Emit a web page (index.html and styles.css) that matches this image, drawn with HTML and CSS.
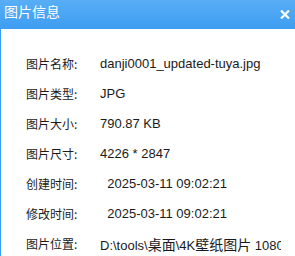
FILE: index.html
```html
<!DOCTYPE html>
<html lang="zh-CN">
<head>
  <meta charset="UTF-8">
  <meta name="viewport" content="width=device-width, initial-scale=1.0">
  <title>图片信息</title>
  <link rel="stylesheet" href="styles.css">
</head>
<body>
  <div class="dialog">
    <div class="title-bar">
      <span class="title">图片信息</span>
      <svg class="close" width="10" height="9" viewBox="0 0 10 9">
        <path d="M1 0.5 L9 8.5 M9 0.5 L1 8.5" stroke="#fff" stroke-width="2.2" fill="none"/>
      </svg>
    </div>
    <div class="content">
      <div class="row"><span class="label">图片名称:</span><span class="value">danji0001_updated-tuya.jpg</span></div>
      <div class="row"><span class="label">图片类型:</span><span class="value">JPG</span></div>
      <div class="row"><span class="label">图片大小:</span><span class="value">790.87 KB</span></div>
      <div class="row"><span class="label">图片尺寸:</span><span class="value">4226 * 2847</span></div>
      <div class="row"><span class="label">创建时间:</span><span class="value">&nbsp;&nbsp;2025-03-11 09:02:21</span></div>
      <div class="row"><span class="label">修改时间:</span><span class="value">&nbsp;&nbsp;2025-03-11 09:02:21</span></div>
      <div class="row"><span class="label">图片位置:</span><span class="value">D:\tools\<span class="cjk">桌面</span>\4K<span class="cjk">壁纸图片</span> 1080P\danji0001_updated-tuya.jpg</span></div>
    </div>
  </div>
</body>
</html>
```

FILE: styles.css
```css
body {
  margin: 0;
  font-family: "Liberation Sans", "Noto Sans CJK SC", sans-serif;
  font-size: 13px;
  color: #1a1a1a;
  background: #fff;
  overflow: hidden;
}

.dialog {
  width: 295px;
  height: 256px;
  overflow: hidden;
}

.title-bar {
  height: 29px;
  box-sizing: border-box;
  display: flex;
  align-items: flex-start;
  justify-content: space-between;
  padding: 0 5px 0 4px;
  background: linear-gradient(#58aef6, #3d9df2);
  color: #fff;
}

.title {
  font-family: "Noto Sans CJK SC", sans-serif;
  font-size: 14px;
  line-height: 22px;
}

.close {
  margin-top: 10px;
}

.content {
  border-left: 1px solid #3d9df2;
  padding: 20px 14px 0 25px;
  height: 227px;
  box-sizing: border-box;
}

.row {
  display: grid;
  grid-template-columns: 74px 1fr;
  height: 30px;
  line-height: 30px;
}

.label {
  font-family: "Noto Sans CJK SC", sans-serif;
  font-size: 12px;
  color: #1a1a1a;
}

.value {
  white-space: nowrap;
  overflow: hidden;
}

.cjk {
  font-family: "Noto Sans CJK SC", sans-serif;
  font-size: 14px;
}
```
